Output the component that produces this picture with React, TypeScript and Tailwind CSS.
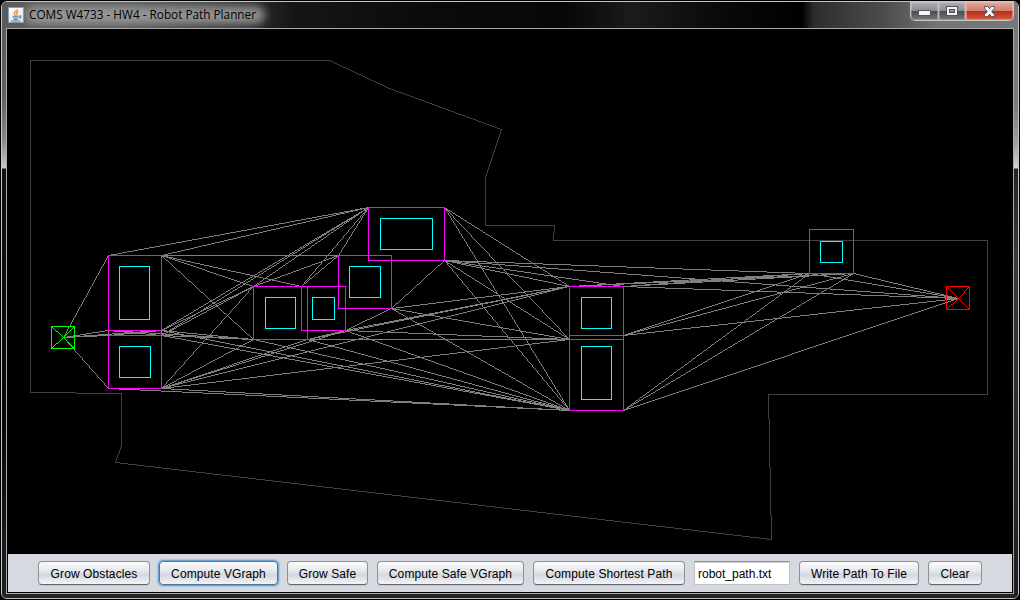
import React from "react";

type Point = [number, number];
type Box = [number, number, number, number];

const BOUNDARY: Point[] = [
  [30, 60], [329, 60], [389, 88], [501, 129], [485, 177], [485, 225], [554, 225], [553, 240],
  [987, 240], [987, 394], [768, 394], [771, 539], [115, 462], [121, 445], [121, 393], [30, 392],
];

const GROWN: Box[] = [
  [108, 255, 161, 330], [108, 335, 161, 388], [253, 286, 307, 339], [301, 286, 345, 330],
  [338, 255, 391, 308], [368, 207, 444, 260], [569, 286, 623, 339], [569, 335, 623, 410], [809, 229, 853, 273],
];

const OBSTACLES: Box[] = [
  [119, 266, 149, 319], [119, 346, 150, 377], [265, 297, 295, 328], [312, 297, 334, 319],
  [349, 266, 380, 297], [380, 218, 432, 249], [581, 297, 611, 328], [581, 346, 611, 399], [820, 241, 842, 262],
];

const START: Point = [63, 337];
const GOAL: Point = [958, 298];

// Corners that lie on the side of an overlapping obstacle and are not graph nodes.
const MERGED_CORNERS = ["307,286", "569,335", "623,339"];
const SKIPPED_EDGES = ["444,207,623,286"];

function crossesBox(a: Point, b: Point, box: Box): boolean {
  const e = 0.4;
  const lo = [box[0] + e, box[1] + e];
  const hi = [box[2] - e, box[3] - e];
  let t0 = 0;
  let t1 = 1;
  for (let k = 0; k < 2; k++) {
    const d = b[k] - a[k];
    if (d === 0) {
      if (a[k] <= lo[k] || a[k] >= hi[k]) return false;
      continue;
    }
    const u = (lo[k] - a[k]) / d;
    const v = (hi[k] - a[k]) / d;
    t0 = Math.max(t0, Math.min(u, v));
    t1 = Math.min(t1, Math.max(u, v));
  }
  return t0 < t1;
}

function side(a: Point, b: Point, c: Point): number {
  return Math.sign((b[0] - a[0]) * (c[1] - a[1]) - (b[1] - a[1]) * (c[0] - a[0]));
}

function crossesBoundary(a: Point, b: Point): boolean {
  return BOUNDARY.some((p, i) => {
    const q = BOUNDARY[(i + 1) % BOUNDARY.length];
    return side(a, b, p) !== side(a, b, q) && side(p, q, a) !== side(p, q, b);
  });
}

function visibilityEdges(): [Point, Point][] {
  const corners: Point[] = GROWN.flatMap(([l, t, r, b]): Point[] => [[l, t], [r, t], [r, b], [l, b]]);
  const nodes: Point[] = [START, GOAL, ...corners.filter((p) => !MERGED_CORNERS.includes(p.join()))];
  const edges: [Point, Point][] = [];
  for (let i = 0; i < nodes.length; i++) {
    for (let j = i + 1; j < nodes.length; j++) {
      const a = nodes[i];
      const b = nodes[j];
      if (SKIPPED_EDGES.includes([...a, ...b].join())) continue;
      if (!GROWN.some((box) => crossesBox(a, b, box)) && !crossesBoundary(a, b)) edges.push([a, b]);
    }
  }
  return edges;
}

const EDGES = visibilityEdges();

// Bresenham line as a path of unit cells, so that every line is one pixel thick.
function pixelLine(a: Point, b: Point): string {
  let [x, y] = a;
  const dx = Math.abs(b[0] - x);
  const dy = -Math.abs(b[1] - y);
  const sx = x < b[0] ? 1 : -1;
  const sy = y < b[1] ? 1 : -1;
  let err = dx + dy;
  let d = "";
  for (;;) {
    d += `M${x} ${y}h1v1h-1z`;
    if (x === b[0] && y === b[1]) return d;
    const e2 = 2 * err;
    if (e2 >= dy) {
      err += dy;
      x += sx;
    }
    if (e2 <= dx) {
      err += dx;
      y += sy;
    }
  }
}

function Line({ from, to }: { from: Point; to: Point }) {
  return <path d={pixelLine(from, to)} />;
}

function Outline({ box }: { box: Box }) {
  return <rect x={box[0] + 0.5} y={box[1] + 0.5} width={box[2] - box[0]} height={box[3] - box[1]} />;
}

function Marker({ box, center, color }: { box: Box; center: Point; color: string }) {
  const [l, t, r, b] = box;
  const corners: Point[] = [[l, t], [r, t], [r, b], [l, b]];
  return (
    <>
      <g stroke={color}><Outline box={box} /></g>
      <g fill={color}>{corners.map((corner, i) => <Line key={i} from={center} to={corner} />)}</g>
    </>
  );
}

function PlannerCanvas() {
  return (
    <svg className="block h-[525px] w-[1004px] bg-black" viewBox="8 29 1004 525" fill="none" shapeRendering="crispEdges">
      <g fill="#404040">
        {BOUNDARY.map((p, i) => <Line key={i} from={p} to={BOUNDARY[(i + 1) % BOUNDARY.length]} />)}
      </g>
      <g fill="#808080">{EDGES.map(([a, b], i) => <Line key={i} from={a} to={b} />)}</g>
      <g stroke="#ff00ff">{GROWN.map((box, i) => <Outline key={i} box={box} />)}</g>
      <g stroke="#00ffff">{OBSTACLES.map((box, i) => <Outline key={i} box={box} />)}</g>
      <Marker box={[51, 326, 74, 348]} center={START} color="#00ff00" />
      <Marker box={[946, 286, 969, 309]} center={GOAL} color="#ff0000" />
    </svg>
  );
}

function JavaIcon() {
  return (
    <svg className="h-4 w-4" viewBox="0 0 16 16" fill="none">
      <defs>
        <linearGradient id="tile" x1="0" y1="0" x2="0" y2="1">
          <stop offset="0" stopColor="#ffffff" />
          <stop offset="1" stopColor="#dce6ee" />
        </linearGradient>
      </defs>
      <rect x="0.5" y="0.5" width="15" height="15" fill="url(#tile)" stroke="#7f9db5" />
      <path d="M9.5 2C10 4 6 4.5 6.200 6.200C6.300 7 7.200 7.600 7.600 8.400M10.600 4.500C8.600 5.200 8 6 8.800 7C9.200 7.600 8.900 8 8.500 8.400" stroke="#ee7a1c" strokeWidth="1.100" />
      <path d="M4.500 9.200H10.500M5 11H10.300M5.800 12.500H9.500M10.800 9.200C13.500 8.300 13.300 10.800 11 11M3 14H12" stroke="#527e9d" strokeWidth="1.050" />
    </svg>
  );
}

function WindowControls() {
  return (
    <div className="flex h-[19px] w-[104px] rounded-b-[5px] border border-t-0 border-[#c5c5c7] bg-[#36363b]">
      <div className="flex w-[28px] items-center justify-center rounded-bl-[4px] border-r border-[#bdbdbf] bg-[linear-gradient(#b1b1b3_0%,#8d8d90_48%,#4b4c50_52%,#77787c_100%)] shadow-[inset_0_0_0_1px_rgba(255,255,255,0.22)]">
        <svg className="mt-1 h-[6px] w-[13px]" viewBox="0 0 13 6" shapeRendering="crispEdges">
          <rect x="0.5" y="0.5" width="12" height="5" fill="#f5f5f5" stroke="#53566b" />
        </svg>
      </div>
      <div className="flex w-[27px] items-center justify-center border-r border-[#bdbdbf] bg-[linear-gradient(#b1b1b3_0%,#8d8d90_48%,#4b4c50_52%,#77787c_100%)] shadow-[inset_0_0_0_1px_rgba(255,255,255,0.22)]">
        <svg className="h-[10px] w-[12px]" viewBox="0 0 12 10" shapeRendering="crispEdges">
          <rect x="0.5" y="0.5" width="11" height="9" fill="#f2f2f2" stroke="#53566b" />
          <rect x="3.500" y="3.500" width="5" height="3" fill="#8a8b90" stroke="#53566b" />
        </svg>
      </div>
      <div className="flex flex-1 items-center justify-center rounded-br-[4px] bg-[linear-gradient(#e3a79c_0%,#d27f70_48%,#b52e16_52%,#d65b3d_100%)] shadow-[inset_0_0_0_1px_rgba(255,210,195,0.4)]">
        <svg className="h-[11px] w-[13px]" viewBox="0 0 13 11">
          <path d="M1.500 .5H4.800L6.500 2.800L8.200 .5H11.500V2.200L8.700 5.500L11.500 8.800V10.500H8.200L6.500 8.200L4.800 10.500H1.500V8.800L4.300 5.500L1.500 2.200Z" fill="#f6f6f6" stroke="#56586c" />
        </svg>
      </div>
    </div>
  );
}

function TitleBar() {
  return (
    <header className="flex h-[26px] shrink-0 items-start justify-between overflow-hidden bg-[linear-gradient(90deg,#5b5b5b_0px,#5b5b5b_120px,#383838_230px,#161616_290px,#0b0b0b_420px,#070707_560px,#1b1b1d_630px,#09090a_720px,#000_800px,#2d2d30_812px,#4b4b4e_880px,#747474_935px,#777_1016px)] pl-[6px] pr-[4px]">
      <div className="flex items-start">
        <div className="mt-[5px]"><JavaIcon /></div>
        <div className="relative ml-[5px] mt-[4px] h-[18px] w-[232px]">
          <div className="absolute -left-1 top-0 h-[18px] w-[240px] rounded-full bg-[#a0a0a0]/85 blur-[4px]" />
          <svg className="relative block h-[18px] w-[232px]" viewBox="0 0 232 18">
            <text x="0" y="13" textLength="227" lengthAdjust="spacingAndGlyphs" className="fill-black font-['Open_Sans','Noto_Sans',sans-serif] text-[12px]">
              COMS W4733 - HW4 - Robot Path Planner
            </text>
          </svg>
        </div>
      </div>
      <WindowControls />
    </header>
  );
}

function PushButton({ label, width, focused = false }: { label: string; width: string; focused?: boolean }) {
  const ring = focused
    ? "border-[#4f7697] shadow-[0_0_0_1px_#73a4d1,0_0_1px_2px_#a9c4df]"
    : "border-[#8d9096] border-b-[#63666d] shadow-[0_1px_0_#c3c7cf]";
  return (
    <button className={`${width} ${ring} flex h-6 shrink-0 items-center justify-center whitespace-nowrap rounded-[4px] border bg-[linear-gradient(#fafafb_0%,#e5e7eb_42%,#d4d7dd_58%,#f2f4f8_100%)] pt-[2px] tracking-[0.1px]`}>
      {label}
    </button>
  );
}

function Toolbar() {
  return (
    <footer className="flex h-[38px] items-start gap-[9px] bg-[#d6d9df] pl-[30px] pt-[7px] font-['Liberation_Sans',Arial,sans-serif] text-[12px] leading-[14px] text-black">
      <PushButton label="Grow Obstacles" width="w-[112px]" />
      <PushButton label="Compute VGraph" width="w-[119px]" focused />
      <PushButton label="Grow Safe" width="w-[81px]" />
      <PushButton label="Compute Safe VGraph" width="w-[147px]" />
      <PushButton label="Compute Shortest Path" width="w-[152px]" />
      <input
        className="h-6 w-[96px] shrink-0 border border-[#bfc2c8] border-t-[#8d8f94] bg-white px-[3px] pt-[2px] shadow-[inset_0_1px_0_#d8d8da] outline-none"
        defaultValue="robot_path.txt"
      />
      <PushButton label="Write Path To File" width="w-[120px]" />
      <PushButton label="Clear" width="w-[54px]" />
    </footer>
  );
}

export default function App() {
  return (
    <div className="h-[600px] w-[1020px] overflow-hidden bg-black p-px">
      <div className="flex h-[598px] w-[1018px] flex-col overflow-hidden rounded-[6px] border border-[#c4c4c6] bg-[#1e1f21]">
        <TitleBar />
        <div className="flex h-[566px]">
          <div className="w-[4px] bg-[linear-gradient(#5b5b5b_0px,#626262_70px,#858585_110px,#c8c8c8_140px,#111_141px,#08090a_400px,#202124_566px)]" />
          <main className="h-[566px] w-[1008px] border border-[#a9a9ab] bg-black">
            <div className="border-x border-b border-black">
              <PlannerCanvas />
              <Toolbar />
            </div>
          </main>
          <div className="w-[4px] bg-[linear-gradient(#777_0px,#7b7b7b_80px,#a0a0a0_115px,#d0d0d0_140px,#232628_141px,#35393d_230px,#1c1e20_566px)]" />
        </div>
        <div className="h-[4px] bg-[#222326]" />
      </div>
    </div>
  );
}
